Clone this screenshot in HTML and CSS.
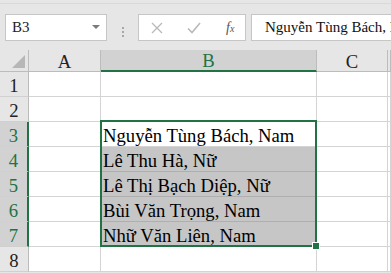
FILE: index.html
```html
<!DOCTYPE html>
<html lang="vi">

<head>
    <meta charset="UTF-8">
    <meta name="viewport" content="width=device-width, initial-scale=1.0">
    <title>Bảng tính</title>
    <link rel="stylesheet" href="styles.css">
</head>

<body>
    <div class="formula-bar">
        <div class="name-box">
            <span>B3</span>
            <svg class="arrow" width="8" height="5" viewBox="0 0 8 5"><path d="M0 0 H8 L4 4 Z" fill="#7b7b7b"/></svg>
        </div>
        <div class="grip"><i></i><i></i><i></i></div>
        <div class="fx-buttons">
            <svg width="12" height="12" viewBox="0 0 12 12"><path d="M1 1 L11 11 M11 1 L1 11" stroke="#b9b9b9" stroke-width="1.3" fill="none"/></svg>
            <svg width="14" height="12" viewBox="0 0 14 12"><path d="M1 6.5 L5 10.5 L13 1" stroke="#b9b9b9" stroke-width="1.6" fill="none"/></svg>
            <span class="fx">f<sub>x</sub></span>
        </div>
        <div class="formula-input">Nguyễn Tùng Bách, Nam</div>
    </div>

    <div class="sheet">
        <div class="hd corner"><span class="tri"></span></div>
        <div class="hd col">A</div>
        <div class="hd col sel">B</div>
        <div class="hd col">C</div>
        <div class="hd col"></div>

        <div class="hd row">1</div><div class="cell"></div><div class="cell"></div><div class="cell"></div><div class="cell"></div>
        <div class="hd row">2</div><div class="cell"></div><div class="cell"></div><div class="cell"></div><div class="cell"></div>
        <div class="hd row sel">3</div><div class="cell"></div><div class="cell">Nguyễn Tùng Bách, Nam</div><div class="cell"></div><div class="cell"></div>
        <div class="hd row sel">4</div><div class="cell"></div><div class="cell picked">Lê Thu Hà, Nữ</div><div class="cell"></div><div class="cell"></div>
        <div class="hd row sel">5</div><div class="cell"></div><div class="cell picked">Lê Thị Bạch Diệp, Nữ</div><div class="cell"></div><div class="cell"></div>
        <div class="hd row sel">6</div><div class="cell"></div><div class="cell picked">Bùi Văn Trọng, Nam</div><div class="cell"></div><div class="cell"></div>
        <div class="hd row sel">7</div><div class="cell"></div><div class="cell picked">Nhữ Văn Liên, Nam</div><div class="cell"></div><div class="cell"></div>
        <div class="hd row">8</div><div class="cell"></div><div class="cell"></div><div class="cell"></div><div class="cell"></div>

        <div class="selection"><span class="fill-handle"></span></div>
    </div>
</body>

</html>
```

FILE: styles.css
```css
body {
    margin: 0;
    background: #e6e6e6;
    font-family: 'Liberation Serif', 'Times New Roman', serif;
    overflow: hidden;
}

.formula-bar {
    display: flex;
    height: 46px;
    margin-top: 3px;
    border-top: 1px solid #d9d9d9;
    padding-top: 10px;
    box-sizing: border-box;
}

.name-box,
.fx-buttons,
.formula-input {
    height: 27px;
    background: #fff;
    border: 1px solid #c6c6c6;
    box-sizing: border-box;
}

.name-box {
    width: 102px;
    margin-left: 5px;
    display: flex;
    align-items: center;
    justify-content: space-between;
    padding: 0 6px 0 6px;
    font-size: 15px;
    color: #222;
}

.grip {
    width: 31px;
    display: flex;
    flex-direction: column;
    align-items: center;
    justify-content: center;
    gap: 2px;
}

.grip i {
    width: 2px;
    height: 2px;
    background: #a8a8a8;
}

.fx-buttons {
    width: 108px;
    display: flex;
    align-items: center;
    padding-left: 12px;
    gap: 24px;
}

.fx {
    font-style: italic;
    font-size: 14px;
    color: #555;
    margin-left: 1px;
}

.fx sub {
    font-size: 10px;
    vertical-align: baseline;
}

.formula-input {
    flex: 1;
    margin-left: 5px;
    border-right: none;
    padding-left: 13px;
    font-size: 15px;
    line-height: 25px;
    white-space: nowrap;
    overflow: hidden;
    color: #111;
}

.sheet {
    position: relative;
    display: grid;
    grid-template-columns: 29px 72px 216px 71px 1fr;
    grid-template-rows: 22px repeat(8, 25px);
    margin-top: 1px;
    font-size: 18.67px;
}

.cell {
    background: #fff;
    border-right: 1px solid #d4d4d4;
    border-bottom: 1px solid #d4d4d4;
    box-sizing: border-box;
    padding-left: 2px;
    display: flex;
    align-items: flex-end;
    line-height: 21px;
    white-space: nowrap;
    color: #000;
}

.cell.picked {
    background: #c6c6c6;
    border-bottom-color: #afafaf;
}

.hd {
    background: #e6e6e6;
    border-right: 1px solid #bcbcbc;
    border-bottom: 1px solid #bcbcbc;
    box-sizing: border-box;
    display: flex;
    align-items: center;
    justify-content: center;
    color: #222;
}

.hd.col {
    padding-top: 2px;
}

.hd.row {
    border-bottom-color: #d0d0d0;
    padding-top: 3px;
}

.hd.sel {
    background: #d2d2d2;
    color: #217346;
}

.hd.col.sel {
    border-bottom: 2px solid #217346;
}

.hd.row.sel {
    border-right: 2px solid #217346;
}

.corner {
    position: relative;
}

.tri {
    position: absolute;
    right: 3px;
    bottom: 3px;
    width: 0;
    height: 0;
    border-left: 13px solid transparent;
    border-bottom: 13px solid #b7b7b7;
}

.selection {
    position: absolute;
    left: 100px;
    top: 70px;
    width: 217px;
    height: 127px;
    border: 2px solid #217346;
    box-sizing: border-box;
    pointer-events: none;
}

.fill-handle {
    position: absolute;
    right: -5px;
    bottom: -5px;
    width: 6px;
    height: 6px;
    background: #217346;
    border: 1px solid #fff;
}
```
